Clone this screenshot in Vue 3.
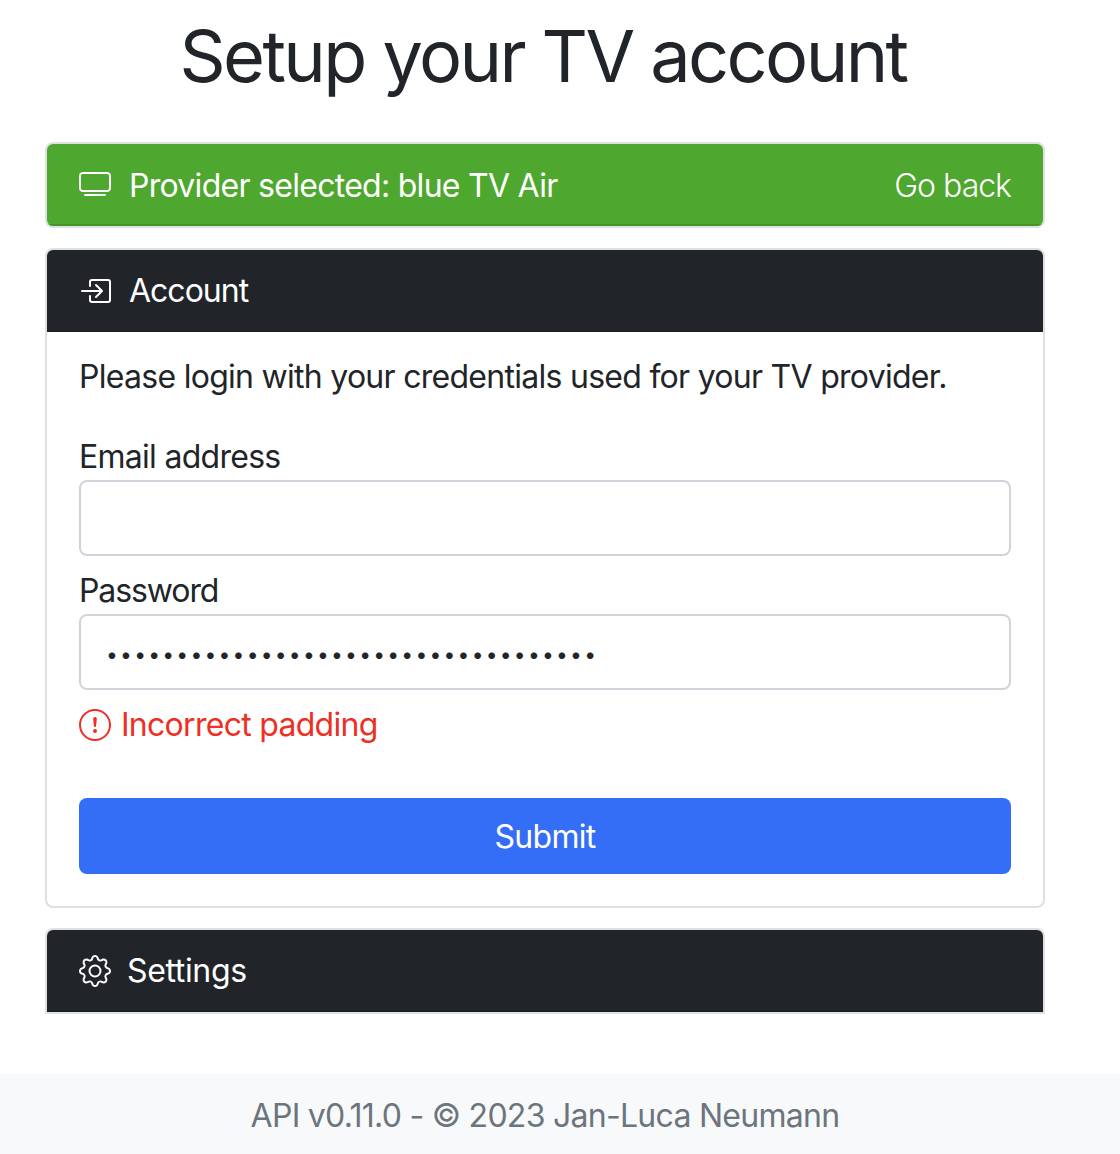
<script setup>
import { ref } from 'vue';

const email = ref('');
const password = ref('12345678901234567890123456789012345');
</script>

<template>
  <div class="page">
    <main class="content">
      <h1 class="title">Setup your TV account</h1>

      <section class="card">
        <header class="card-header header-green">
          <svg class="icon" viewBox="0 0 16 16" fill="currentColor">
            <path d="M2.5 13.5A.5.5 0 0 1 3 13h10a.5.5 0 0 1 0 1H3a.5.5 0 0 1-.5-.5zM13.991 3l.024.001a1.46 1.46 0 0 1 .538.143.757.757 0 0 1 .302.254c.067.1.145.277.145.602v5.991l-.001.024a1.464 1.464 0 0 1-.143.538.758.758 0 0 1-.254.302c-.1.067-.277.145-.602.145H2.009l-.024-.001a1.464 1.464 0 0 1-.538-.143.758.758 0 0 1-.302-.254C1.078 10.502 1 10.325 1 10V4.009l.001-.024a1.46 1.46 0 0 1 .143-.538.758.758 0 0 1 .254-.302C1.498 3.078 1.675 3 2 3h11.991zM14 2H2C0 2 0 4 0 4v6c0 2 2 2 2 2h12c2 0 2-2 2-2V4c0-2-2-2-2-2z" />
          </svg>
          <span class="header-text">Provider selected: blue TV Air</span>
          <a class="go-back">Go back</a>
        </header>
      </section>

      <section class="card">
        <header class="card-header header-dark">
          <svg class="icon" viewBox="0 0 16 16" fill="currentColor">
            <path d="M6 3.5a.5.5 0 0 1 .5-.5h8a.5.5 0 0 1 .5.5v9a.5.5 0 0 1-.5.5h-8a.5.5 0 0 1-.5-.5v-2a.5.5 0 0 0-1 0v2A1.5 1.5 0 0 0 6.5 14h8a1.5 1.5 0 0 0 1.5-1.5v-9A1.5 1.5 0 0 0 14.5 2h-8A1.5 1.5 0 0 0 5 3.5v2a.5.5 0 0 0 1 0v-2z" />
            <path d="M11.854 8.354a.5.5 0 0 0 0-.708l-3-3a.5.5 0 1 0-.708.708L10.293 7.5H1.5a.5.5 0 0 0 0 1h8.793l-2.147 2.146a.5.5 0 0 0 .708.708l3-3z" />
          </svg>
          <span class="header-text account-text">Account</span>
        </header>
        <form class="card-body" @submit.prevent>
          <p class="intro">Please login with your credentials used for your TV provider.</p>
          <label class="label" for="email">Email address</label>
          <input id="email" v-model="email" class="input" type="email" />
          <label class="label label-password" for="password">Password</label>
          <input id="password" v-model="password" class="input input-password" type="password" />
          <div class="error">
            <svg class="icon" viewBox="0 0 16 16" fill="currentColor">
              <path d="M8 15A7 7 0 1 1 8 1a7 7 0 0 1 0 14zm0 1A8 8 0 1 0 8 0a8 8 0 0 0 0 16z" />
              <path d="M7.002 11a1 1 0 1 1 2 0 1 1 0 0 1-2 0zM7.1 4.995a.905.905 0 1 1 1.8 0l-.35 3.507a.552.552 0 0 1-1.1 0L7.1 4.995z" />
            </svg>
            <span>Incorrect padding</span>
          </div>
          <button class="submit" type="submit">Submit</button>
        </form>
      </section>

      <section class="card last">
        <header class="card-header header-dark">
          <svg class="icon" viewBox="0 0 16 16" fill="currentColor">
            <path d="M8 4.754a3.246 3.246 0 1 0 0 6.492 3.246 3.246 0 0 0 0-6.492zM5.754 8a2.246 2.246 0 1 1 4.492 0 2.246 2.246 0 0 1-4.492 0z" />
            <path d="M9.796 1.343c-.527-1.79-3.065-1.79-3.592 0l-.094.319a.873.873 0 0 1-1.255.52l-.292-.16c-1.64-.892-3.433.902-2.54 2.541l.159.292a.873.873 0 0 1-.52 1.255l-.319.094c-1.79.527-1.79 3.065 0 3.592l.319.094a.873.873 0 0 1 .52 1.255l-.16.292c-.892 1.64.901 3.434 2.541 2.54l.292-.159a.873.873 0 0 1 1.255.52l.094.319c.527 1.79 3.065 1.79 3.592 0l.094-.319a.873.873 0 0 1 1.255-.52l.292.16c1.64.893 3.434-.902 2.54-2.541l-.159-.292a.873.873 0 0 1 .52-1.255l.319-.094c1.79-.527 1.79-3.065 0-3.592l-.319-.094a.873.873 0 0 1-.52-1.255l.16-.292c.893-1.64-.902-3.433-2.541-2.54l-.292.159a.873.873 0 0 1-1.255-.52l-.094-.319zm-2.633.283c.246-.835 1.428-.835 1.674 0l.094.319a1.873 1.873 0 0 0 2.693 1.115l.291-.16c.764-.415 1.6.42 1.184 1.185l-.159.292a1.873 1.873 0 0 0 1.116 2.692l.318.094c.835.246.835 1.428 0 1.674l-.319.094a1.873 1.873 0 0 0-1.115 2.693l.16.291c.415.764-.42 1.6-1.185 1.184l-.291-.159a1.873 1.873 0 0 0-2.693 1.116l-.094.318c-.246.835-1.428.835-1.674 0l-.094-.319a1.873 1.873 0 0 0-2.692-1.115l-.292.16c-.764.415-1.6-.42-1.184-1.185l.159-.291A1.873 1.873 0 0 0 1.945 8.93l-.319-.094c-.835-.246-.835-1.428 0-1.674l.319-.094A1.873 1.873 0 0 0 3.06 4.377l-.16-.292c-.415-.764.42-1.6 1.185-1.184l.292.159a1.873 1.873 0 0 0 2.692-1.115l.094-.319z" />
          </svg>
          <span class="header-text settings-text">Settings</span>
        </header>
      </section>
    </main>

    <footer class="footer">
      <span>API v0.11.0 - © 2023 Jan-Luca Neumann</span>
    </footer>
  </div>
</template>

<style scoped>
.page {
  display: flex;
  flex-direction: column;
  min-height: 1154px;
  font-family: Inter, "Liberation Sans", sans-serif;
  font-size: 32px;
  line-height: 48px;
  letter-spacing: -0.72px;
  color: #212529;
  background: #fff;
}

.content {
  flex: 1;
  display: flex;
  flex-direction: column;
  gap: 20px;
  width: 1000px;
  margin-left: 45px;
}

.title {
  margin: 0 0 8px;
  height: 114px;
  padding-right: 4px;
  font-size: 72px;
  line-height: 112px;
  font-weight: 400;
  letter-spacing: -2.6px;
  text-align: center;
}

.card {
  border: 2px solid #dfe0e1;
  border-radius: 8px;
  overflow: hidden;
}

.card.last {
  border-bottom-left-radius: 0;
  border-bottom-right-radius: 0;
}

.card-header {
  display: flex;
  align-items: center;
  height: 82px;
  padding: 0 32px;
  color: #fff;
}

.header-green {
  background: #4ea72e;
  border-bottom: 2px solid #459429;
  box-sizing: border-box;
}

.header-green .header-text,
.header-green .go-back {
  padding-top: 4px;
}

.header-dark {
  background: #212529;
  box-shadow: inset 0 -2px 0 #1d2024;
}

.icon {
  flex: none;
  width: 32px;
  height: 32px;
}

.header-text {
  margin-left: 18px;
}

.account-text {
  letter-spacing: -1px;
}

.settings-text {
  margin-left: 16px;
  letter-spacing: -0.35px;
}

.go-back {
  margin-left: auto;
  font-weight: 300;
  letter-spacing: -1px;
  cursor: pointer;
}

.card-body {
  display: flex;
  flex-direction: column;
  padding: 21px 32px 32px;
}

.intro {
  margin: 0 0 31px;
}

.label {
  height: 48px;
  box-sizing: border-box;
  padding-top: 2px;
  line-height: 46px;
}

.label-password {
  letter-spacing: -1.1px;
}

.input {
  height: 76px;
  box-sizing: border-box;
  margin-bottom: 10px;
  padding: 0 26px;
  border: 2px solid #ced4da;
  border-radius: 8px;
  font: inherit;
  color: inherit;
  outline: none;
}

.input-password {
  padding-top: 4px;
  padding-left: 25px;
  font-size: 21px;
  letter-spacing: 2.25px;
}

.error {
  display: flex;
  align-items: center;
  gap: 10px;
  margin-top: 1px;
  color: #ee2f24;
}

.submit {
  height: 76px;
  margin-top: 49px;
  padding-top: 2px;
  border: none;
  border-radius: 8px;
  background: #346df6;
  color: #fff;
  font: inherit;
  letter-spacing: inherit;
  cursor: pointer;
}

.footer {
  display: flex;
  align-items: center;
  justify-content: center;
  height: 80px;
  box-sizing: border-box;
  padding: 4px 30px 0 0;
  background: #f8f9fa;
  color: #6c757d;
}
</style>

<style>
html,
body {
  margin: 0;
}
</style>
